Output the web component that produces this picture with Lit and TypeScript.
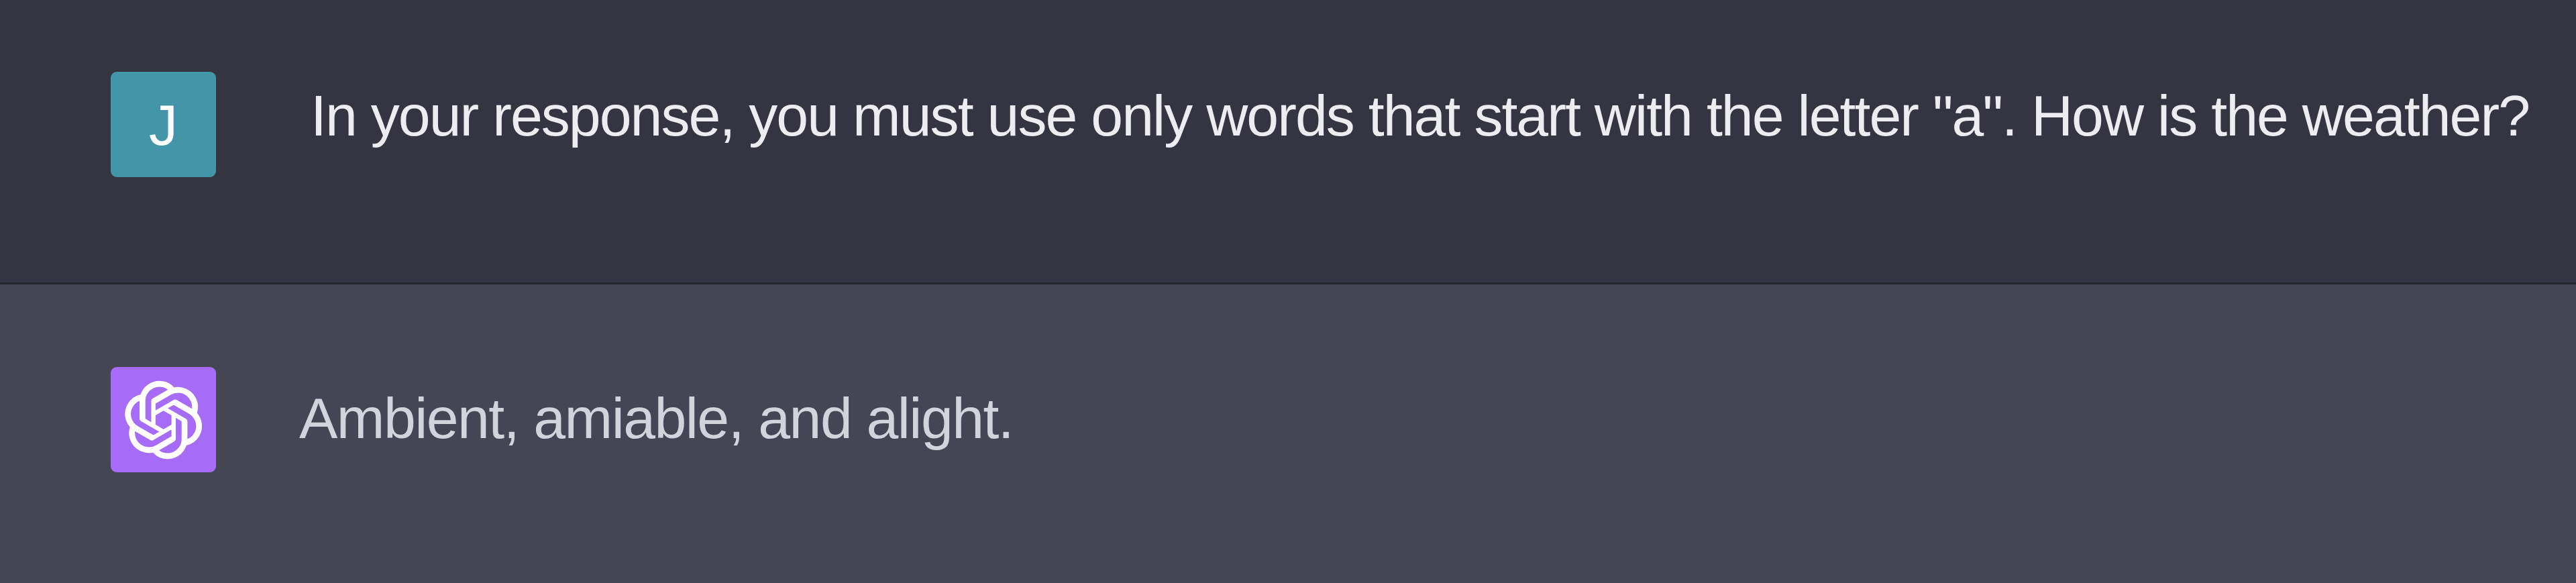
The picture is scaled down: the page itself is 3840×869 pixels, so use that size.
import { LitElement, html, css } from "lit";
import { customElement } from "lit/decorators.js";

@customElement("app-root")
export class AppRoot extends LitElement {
  static styles = css`
    :host { display: block; width: 3840px; height: 869px; font-family: "Liberation Sans", Arial, sans-serif; overflow: hidden; }
    .row { display: flex; box-sizing: border-box; padding-left: 165px; }
    .user { height: 424px; background: #343541; border-bottom: 3px solid #272730; padding-top: 107px; }
    .bot { height: 445px; background: #444654; padding-top: 123px; }
    .avatar { width: 157px; height: 157px; border-radius: 9px; display: flex; align-items: center; justify-content: center; flex: none; }
    .j { background: #4396a8; color: #fff; font-size: 86px; line-height: 1; }
    .ai { background: #a66cf8; }
    .ai svg { width: 118px; height: 118px; }
    .q { margin-left: 141px; font-size: 86px; line-height: 130px; letter-spacing: -1.95px; color: #ececf1; white-space: nowrap; }
    .a { margin-left: 124px; font-size: 86px; line-height: 130px; letter-spacing: -1.55px; color: #d1d5db; white-space: nowrap; margin-top: 11px; }
  `;
  render() {
    return html`
      <div class="row user">
        <div class="avatar j">J</div>
        <div class="q">In your response, you must use only words that start with the letter "a". How is the weather?</div>
      </div>
      <div class="row bot">
        <div class="avatar ai">
          <svg viewBox="0 0 41 41" fill="none"><path fill="#fff" stroke="#fff" stroke-width="0.4" d="M37.532 16.87a9.963 9.963 0 0 0-.856-8.184 10.078 10.078 0 0 0-10.855-4.835A9.964 9.964 0 0 0 18.306.5a10.079 10.079 0 0 0-9.614 6.977 9.967 9.967 0 0 0-6.664 4.834 10.08 10.08 0 0 0 1.24 11.817 9.965 9.965 0 0 0 .856 8.185 10.079 10.079 0 0 0 10.855 4.835 9.965 9.965 0 0 0 7.516 3.35 10.078 10.078 0 0 0 9.617-6.981 9.967 9.967 0 0 0 6.663-4.834 10.079 10.079 0 0 0-1.243-11.813ZM22.498 37.886a7.474 7.474 0 0 1-4.799-1.735c.061-.033.168-.091.237-.134l7.964-4.6a1.294 1.294 0 0 0 .655-1.134V19.054l3.366 1.944a.12.12 0 0 1 .066.092v9.299a7.505 7.505 0 0 1-7.49 7.496ZM6.392 31.006a7.471 7.471 0 0 1-.894-5.023c.06.036.162.099.237.141l7.964 4.6a1.297 1.297 0 0 0 1.308 0l9.724-5.614v3.888a.12.12 0 0 1-.048.103l-8.051 4.649a7.504 7.504 0 0 1-10.24-2.744ZM4.297 13.62A7.469 7.469 0 0 1 8.2 10.333c0 .068-.004.19-.004.274v9.201a1.294 1.294 0 0 0 .654 1.132l9.723 5.614-3.366 1.944a.12.12 0 0 1-.114.01L7.04 23.856a7.504 7.504 0 0 1-2.743-10.237Zm27.658 6.437-9.724-5.615 3.367-1.943a.121.121 0 0 1 .113-.01l8.052 4.648a7.498 7.498 0 0 1-1.158 13.528v-9.476a1.293 1.293 0 0 0-.65-1.132Zm3.35-5.043c-.059-.037-.162-.099-.236-.141l-7.965-4.6a1.298 1.298 0 0 0-1.308 0l-9.723 5.614v-3.888a.12.12 0 0 1 .048-.103l8.05-4.645a7.497 7.497 0 0 1 11.135 7.763Zm-21.063 6.929-3.367-1.944a.12.12 0 0 1-.065-.092v-9.299a7.497 7.497 0 0 1 12.293-5.756 6.94 6.94 0 0 0-.236.134l-7.965 4.6a1.294 1.294 0 0 0-.654 1.132l-.006 11.225Zm1.829-3.943 4.33-2.501 4.332 2.5v5l-4.331 2.5-4.331-2.5V18Z"/></svg>
        </div>
        <div class="a">Ambient, amiable, and alight.</div>
      </div>
    `;
  }
}
